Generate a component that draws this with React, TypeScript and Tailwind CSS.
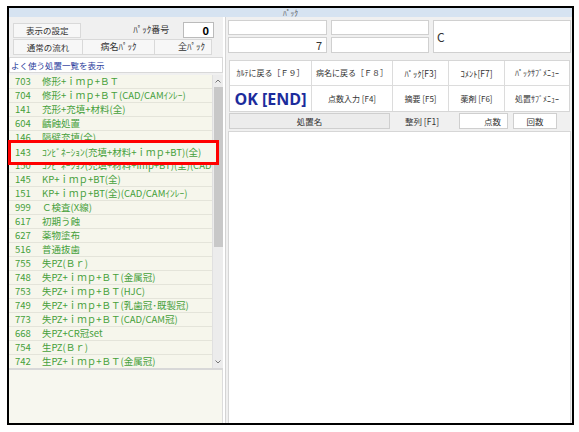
import React from "react";

const rows: [string, string][] = [
  ["703", "修形+ｉｍｐ+ＢＴ"],
  ["704", "修形+ｉｍｐ+ＢＴ(CAD/CAMｲﾝﾚｰ)"],
  ["141", "充形+充填+材料(全)"],
  ["604", "齲蝕処置"],
  ["146", "隔壁充填(全)"],
  ["143", "ｺﾝﾋﾞﾈｰｼｮﾝ(充填+材料+ｉｍｐ+BT)(全)"],
  ["150", "ｺﾝﾋﾞﾈｰｼｮﾝ(充填+材料+imp+BT)(全)(CAD"],
  ["145", "KP+ｉｍｐ+BT(全)"],
  ["151", "KP+ｉｍｐ+BT(全)(CAD/CAMｲﾝﾚｰ)"],
  ["999", "Ｃ検査(X線)"],
  ["617", "初期う蝕"],
  ["627", "薬物塗布"],
  ["516", "普通抜歯"],
  ["755", "失PZ(Ｂｒ)"],
  ["748", "失PZ+ｉｍｐ+ＢＴ(金属冠)"],
  ["753", "失PZ+ｉｍｐ+ＢＴ(HJC)"],
  ["749", "失PZ+ｉｍｐ+ＢＴ(乳歯冠･既製冠)"],
  ["773", "失PZ+ｉｍｐ+ＢＴ(CAD/CAM冠)"],
  ["668", "失PZ+CR冠set"],
  ["754", "生PZ(Ｂｒ)"],
  ["742", "生PZ+ｉｍｐ+ＢＴ(金属冠)"],
];

const Btn = ({ children, className = "" }: { children: React.ReactNode; className?: string }) => (
  <div
    className={
      "flex items-center justify-center border border-[#d9d9d9] bg-[#f7f7f7] text-[8.5px] text-[#333] whitespace-nowrap " +
      className
    }
  >
    {children}
  </div>
);

const GridBtn = ({ children, className = "" }: { children: React.ReactNode; className?: string }) => (
  <div
    className={
      "flex items-center justify-center border-r border-b border-[#dcdcdc] bg-white text-[#333] whitespace-nowrap overflow-hidden " +
      className
    }
  >
    {children}
  </div>
);

export default function App() {
  return (
    <div
      className="w-[579px] h-[432px] bg-white pl-[7px] pt-[6px]"
      style={{ fontFamily: '"Noto Sans CJK JP", "Noto Sans", sans-serif' }}
    >
      <div className="w-[567px] h-[419px] border-2 border-black flex flex-col bg-[#f0f0f0]">
        {/* title bar */}
        <div className="h-[9px] bg-[#d6e3f1] flex items-center justify-center text-[7.5px] leading-none text-[#555]">
          ﾊﾟｯｸ
        </div>
        <div className="flex flex-1 min-h-0">
          {/* left panel */}
          <div className="w-[214px] flex flex-col">
            <div className="pt-[5px] pl-[4px] pr-[9px] flex flex-col gap-[1px]">
              <div className="flex items-center h-[16px]">
                <Btn className="w-[69px] h-[15px]">表示の設定</Btn>
                <div className="ml-[52px] text-[9px] text-[#333] whitespace-nowrap">ﾊﾟｯｸ番号</div>
                <div className="ml-[14px] w-[31px] h-[16px] bg-white border border-[#bbb] flex items-center justify-end pr-[4px] text-[11px] font-bold text-black">
                  0
                </div>
              </div>
              <div className="flex h-[16px]">
                <Btn className="w-[70px] h-[16px]">通常の流れ</Btn>
                <Btn className="w-[72px] h-[16px] border-l-0 text-[9px]">病名ﾊﾟｯｸ</Btn>
                <Btn className="w-[57px] h-[16px] border-l-0 justify-end pr-[6px] text-[9px]">全ﾊﾟｯｸ</Btn>
              </div>
            </div>
            <div className="mt-[2px] h-[16px] bg-white border border-[#d8d8d8] flex items-center pl-[1px] text-[8.5px] text-[#2b3c9c] whitespace-nowrap">
              よく使う処置一覧を表示
            </div>
            <div className="relative mt-[2px] h-[295px] flex bg-[#f6f6ec] border-b-2 border-[#d8d8d8]">
              <div className="flex-1 flex flex-col overflow-hidden">
                {rows.map(([n, t], i) => (
                  <div
                    key={i}
                    className="h-[14px] shrink-0 flex items-center border-b border-[#e4e4da] text-[9.5px] leading-none text-[#45a03a] whitespace-nowrap"
                  >
                    <span className="w-[33px] pl-[6px]">{n}</span>
                    <span>{t}</span>
                  </div>
                ))}
              </div>
              <div className="w-[11px] bg-[#ececec] flex flex-col items-center border-l border-[#e0e0e0]">
                <div className="h-[12px] flex items-center justify-center">
                  <svg width="6" height="4" viewBox="0 0 6 4">
                    <path d="M0.5 3.5 L3 1 L5.5 3.5" stroke="#777" fill="none" strokeWidth="1" />
                  </svg>
                </div>
                <div className="w-[9px] h-[160px] bg-[#c8c8c8]" />
                <div className="flex-1" />
                <div className="h-[12px] flex items-center justify-center">
                  <svg width="6" height="4" viewBox="0 0 6 4">
                    <path d="M0.5 0.5 L3 3 L5.5 0.5" stroke="#777" fill="none" strokeWidth="1" />
                  </svg>
                </div>
              </div>
              {/* highlight overlay */}
              <div className="absolute left-[-1px] top-[65px] w-[211px] h-[25px] border-[3px] border-[#ff0000] bg-[#f6f6ec] flex items-center text-[9.5px] leading-none text-[#45a03a] whitespace-nowrap">
                <span className="w-[31px] pl-[4px] shrink-0">143</span>
                <span>ｺﾝﾋﾞﾈｰｼｮﾝ(充填+材料+ｉｍｐ+BT)(全)</span>
              </div>
            </div>
            <div className="flex-1 bg-[#f7f7ef] border-r border-[#dcdcdc]" />
          </div>
          {/* divider */}
          <div className="w-[3px] bg-white border-r border-[#d4d4d4]" />
          {/* right panel */}
          <div className="flex-1 flex flex-col pl-[2px] pr-[1px]">
            <div className="pt-[3px] flex gap-[4px] h-[37px]">
              <div className="flex flex-col gap-[2px]">
                <div className="w-[99px] h-[15px] bg-white border border-[#d0d0d0]" />
                <div className="w-[99px] h-[16px] bg-white border border-[#d0d0d0] flex items-center justify-end pr-[4px] text-[11px] text-[#333]">
                  7
                </div>
              </div>
              <div className="flex flex-col gap-[2px]">
                <div className="w-[98px] h-[15px] bg-white border border-[#d0d0d0]" />
                <div className="w-[98px] h-[16px] bg-white border border-[#d0d0d0]" />
              </div>
              <div className="flex-1 h-[33px] bg-white border border-[#d0d0d0] flex items-center pl-[3px] text-[12px] text-[#333]">
                C
              </div>
            </div>
            <div className="mt-[6px] ml-[1px] mr-[1px] border border-[#d6d6d6] bg-white">
              <div className="grid grid-cols-[82px_81px_56px_56px_1fr] h-[25px]">
                <GridBtn className="text-[8px]">ｶﾙﾃに戻る［Ｆ９］</GridBtn>
                <GridBtn className="text-[8px]">病名に戻る［Ｆ８］</GridBtn>
                <GridBtn className="text-[8.5px]">ﾊﾟｯｸ[F3]</GridBtn>
                <GridBtn className="text-[8.5px]">ｺﾒﾝﾄ[F7]</GridBtn>
                <GridBtn className="text-[8px] border-r-0">ﾊﾟｯｸｻﾌﾞﾒﾆｭｰ</GridBtn>
              </div>
              <div className="grid grid-cols-[82px_81px_56px_56px_1fr] h-[25px]">
                <GridBtn className="border-b-0 text-[16px] font-bold">
                  <span
                    className="text-[#1c2c9c]"
                    style={{ fontFamily: '"Open Sans", "Noto Sans", sans-serif' }}
                  >
                    OK [END]
                  </span>
                </GridBtn>
                <GridBtn className="border-b-0 text-[8px]">点数入力 [F4]</GridBtn>
                <GridBtn className="border-b-0 text-[8px]">摘要 [F5]</GridBtn>
                <GridBtn className="border-b-0 text-[8px]">薬剤 [F6]</GridBtn>
                <GridBtn className="border-b-0 border-r-0 text-[8px]">処置ｻﾌﾞﾒﾆｭｰ</GridBtn>
              </div>
            </div>
            <div className="flex h-[16px] mt-[1px] ml-[1px] items-stretch text-[8.5px] text-[#333]">
              <div className="w-[161px] bg-[#ececec] border border-[#cfcfcf] flex items-center justify-center">処置名</div>
              <div className="w-[64px] flex items-center justify-center">整列 [F1]</div>
              <div className="ml-[5px] w-[49px] bg-white border border-[#cfcfcf] flex items-center justify-end pr-[6px]">点数</div>
              <div className="ml-[5px] w-[44px] bg-white border border-[#cfcfcf] flex items-center justify-center">回数</div>
            </div>
            <div className="flex-1 mt-[2px] bg-white border border-[#d6d6d6] border-b-0" />
          </div>
        </div>
      </div>
    </div>
  );
}
